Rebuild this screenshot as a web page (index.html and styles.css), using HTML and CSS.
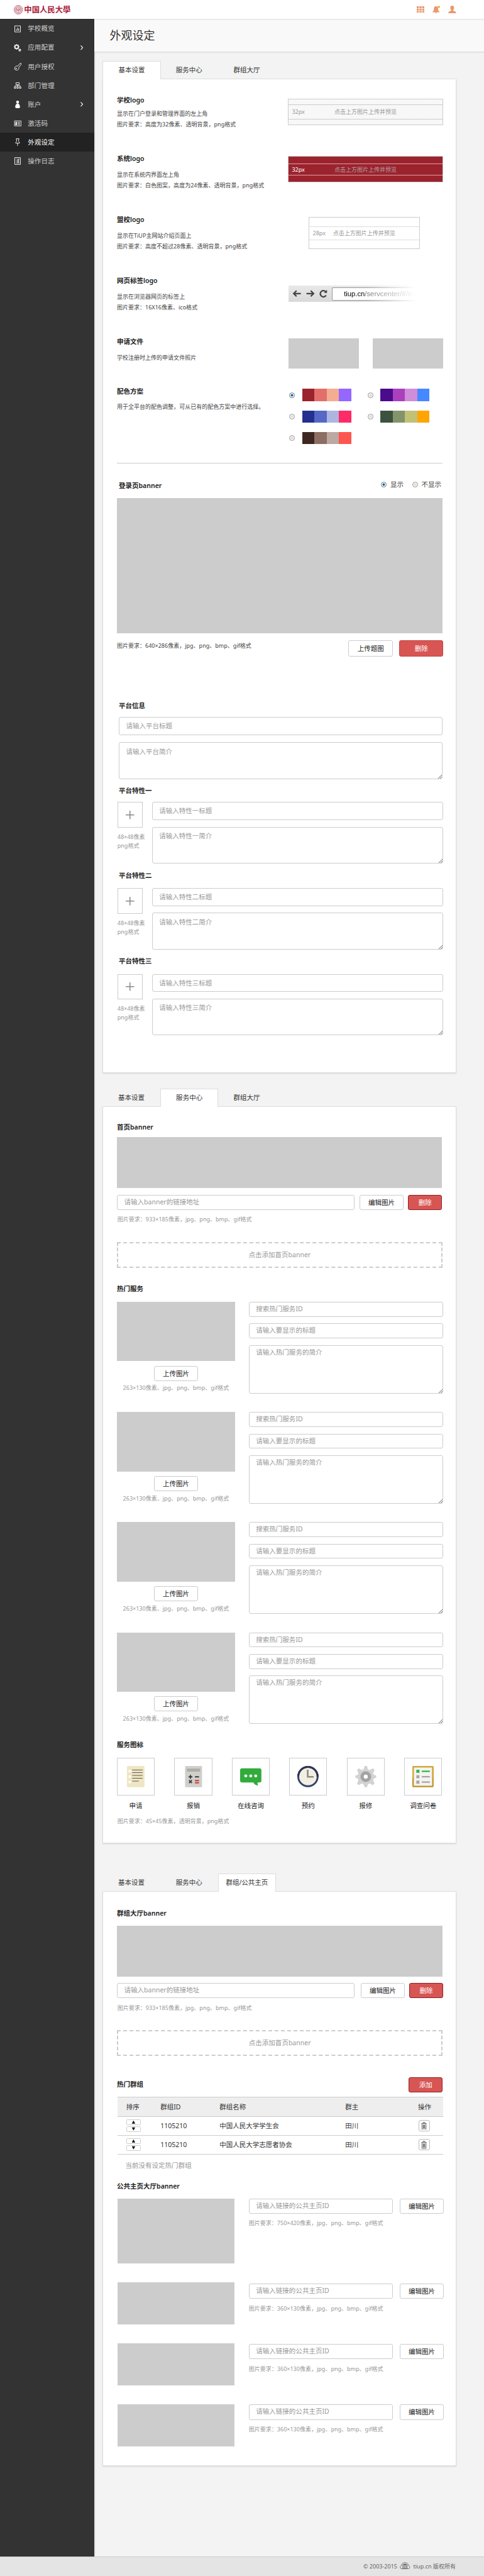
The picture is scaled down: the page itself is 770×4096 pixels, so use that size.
FILE: index.html
```html
<!DOCTYPE html>
<html lang="zh-CN">
<head>
<meta charset="utf-8">
<title>外观设定</title>
<link rel="stylesheet" href="styles.css">
</head>
<body>
<div class="page">
  <header class="topbar">
    <div class="brand">
      <svg width="19" height="20" viewBox="0 0 19 20" fill="none" stroke="#b0475a"><ellipse cx="9.5" cy="10" rx="8.8" ry="9.3" fill="#ecd0d5"/><ellipse cx="9.5" cy="10" rx="5.6" ry="6" fill="#fff"/><path d="M6.5 6.5v6M9.5 5.5v9M12.5 6.5v6M6.500 9l3 3 3-3" stroke-width="1.2"/></svg>
      <span class="brand-name">中国人民大學</span>
    </div>
    <div class="tools">
      <svg width="16" height="14" viewBox="0 0 16 14" fill="#e9986f"><path d="M0 0h4.500v4H0zM5.800 0h4.500v4H5.800zM11.500 0H16v4h-4.500zM0 5h4.500v4H0zM5.800 5h4.500v4H5.800zM11.500 5H16v4h-4.500zM0 10h4.500v4H0zM5.800 10h4.500v4H5.800zM11.500 10H16v4h-4.500z"/></svg>
      <svg width="16" height="17" viewBox="0 0 16 17" fill="#e9986f"><path d="M7.500 1c3.500.5 4.500 3 4.500 6 0 3 1 4.500 3 6v1H0v-1c2-1.500 3-3 3-6 0-3 1-5.500 4.500-6zM5.500 14.500h4c0 2.500-4 2.500-4 0z"/><circle cx="13.500" cy="2.500" r="2.300" fill="#f5a300"/></svg>
      <svg width="17" height="16" viewBox="0 0 17 16" fill="#e9986f"><path d="M8.500 0c3 0 4 2 4 4.500 0 2-.9 3.700-2 4.800v1.500c3 .8 6 1.700 6.500 5.200H0c.5-3.500 3.500-4.400 6.500-5.200V9.300c-1.100-1.100-2-2.800-2-4.800C4.500 2 5.500 0 8.500 0z"/></svg>
    </div>
  </header>
  <div class="frame">
    <nav class="side">
      <a class="item"><svg class="ico" viewBox="0 0 16 16"><path d="M2 1.500h12v13H2zM5.500 12V8.500M8 12V5M10.500 12V7" /></svg>学校概览</a>
      <a class="item"><svg class="ico" viewBox="0 0 16 16"><circle cx="6" cy="6" r="3.600" stroke-width="2.400"/><path d="M6 0v2M6 10v2M0 6h2M10 6h2M1.800 1.800l1.400 1.400M8.800 8.800l1.400 1.400M10.200 1.800L8.800 3.200M3.200 8.800l-1.400 1.400" stroke-width="1.800"/><circle cx="12.600" cy="12.800" r="1.700" stroke-width="2"/></svg>应用配置<svg class="chev" viewBox="0 0 8 10"><path d="M2 .5L6 5 2 9.500"/></svg></a>
      <a class="item"><svg class="ico" viewBox="0 0 16 16"><path d="M8.500 6.500L13.300.8h1.900v3L10.400 9.500c.8 2-.1 5-3.200 6-3 .6-6-1.300-5.600-4.500.5-3 4-5.300 6.900-4.500z"/><circle cx="5" cy="11.800" r="1"/></svg>用户授权</a>
      <a class="item"><svg class="ico" viewBox="0 0 16 16"><path d="M4.500 2h7v4h-7zM8 6v3M2.500 11V8.500h11V11M8 8.500V11M1 11h3v3H1zM6.500 11h3v3h-3zM12 11h3v3h-3z"/></svg>部门管理</a>
      <a class="item"><svg class="ico solid" viewBox="0 0 16 16"><circle cx="8" cy="3" r="3"/><path d="M8 5.800c3 1 5 4 5 7.200 0 2-1 3-2.500 3h-5C4 16 3 15 3 13c0-3.200 2-6.200 5-7.200z"/></svg>账户<svg class="chev" viewBox="0 0 8 10"><path d="M2 .5L6 5 2 9.500"/></svg></a>
      <a class="item"><svg class="ico" viewBox="0 0 16 16"><path d="M1.500 3h14v10.500h-14zM8.500 6h4.500M8.500 8.300h4.500M8.500 10.600h4.500"/><path d="M4 5.500h2.300v2H4zM3.600 8.800h3V11h-3z" fill="#fff"/></svg>激活码</a>
      <a class="item on"><svg class="ico" viewBox="0 0 16 16"><path d="M4.500.8h7M5.500.8L6 6.500c-1.600 1-2.200 2-2.200 3.500h8.400c0-1.500-.6-2.500-2.200-3.500l.5-5.700M8 10v6"/></svg>外观设定</a>
      <a class="item"><svg class="ico" viewBox="0 0 16 16"><path d="M2 .8h12v14.400H2zM5 4h1M7.500 4H12M5 8h6M5 12h7M7.500 6h4M7.500 10h4"/></svg>操作日志</a>
    </nav>
    <main class="main">
      <h1 class="title">外观设定</h1>

      <div class="tabs first"><a class="tab on">基本设置</a><a class="tab">服务中心</a><a class="tab">群组大厅</a></div>
      <section class="panel basic">
        <div class="row r1">
          <div><h2>学校logo</h2><p>显示在门户登录和管理界面的左上角<br>图片要求：高度为32像素、透明背景，png格式</p></div>
          <div class="drop hatch"><div class="band"><span>32px</span><b>点击上方图片上传并预览</b></div></div>
        </div>
        <div class="row r2">
          <div><h2>系统logo</h2><p>显示在系统内界面左上角<br>图片要求：白色图案，高度为24像素、透明背景，png格式</p></div>
          <div class="drop red"><div class="band"><span>32px</span><b>点击上方图片上传并预览</b></div></div>
        </div>
        <div class="row r3">
          <div><h2>盟校logo</h2><p>显示在TiUP主网站介绍页面上<br>图片要求：高度不超过28像素、透明背景，png格式</p></div>
          <div class="drop small"><div class="band"><span>28px</span><b>点击上方图片上传并预览</b></div></div>
        </div>
        <div class="row r4">
          <div><h2>网页标签logo</h2><p>显示在浏览器网页的标签上<br>图片要求：16X16像素、ico格式</p></div>
          <div class="browser">
            <svg width="84" height="34" viewBox="0 0 84 34" fill="none" stroke="#444" stroke-width="3"><path d="M26 17H12M17 11l-6 6 6 6M38 17h14M47 11l6 6-6 6"/><path d="M79.500 20.500a6.500 6.500 0 1 1-1-7.500"/><path d="M81.500 9v6.500H75z" fill="#444" stroke="none"/></svg>
            <div class="url"><i>tiup.cn</i>/servcenter/#/in</div>
          </div>
        </div>
        <div class="row r5">
          <div><h2>申请文件</h2><p>学校注册时上传的申请文件照片</p></div>
          <div class="files"><div class="gray"></div><div class="gray"></div></div>
        </div>
        <div class="row r6">
          <div><h2>配色方案</h2><p>用于全平台的配色调整，可从已有的配色方案中进行选择。</p></div>
          <div class="schemes">
            <div class="scheme"><i class="radio checked"></i><div class="sw s1"><i></i><i></i><i></i><i></i></div></div>
            <div class="scheme"><i class="radio"></i><div class="sw s2"><i></i><i></i><i></i><i></i></div></div>
            <div class="scheme"><i class="radio"></i><div class="sw s3"><i></i><i></i><i></i><i></i></div></div>
            <div class="scheme"><i class="radio"></i><div class="sw s4"><i></i><i></i><i></i><i></i></div></div>
            <div class="scheme"><i class="radio"></i><div class="sw s5"><i></i><i></i><i></i><i></i></div></div>
          </div>
        </div>
        <div class="rule"></div>
        <div class="login-head"><h2>登录页banner</h2><div class="choices"><i class="radio checked"></i><span>显示</span><i class="radio second"></i><span>不显示</span></div></div>
        <div class="gray login-img"></div>
        <div class="login-foot"><p>图片要求：640×286像素，jpg、png、bmp、gif格式</p><a class="btn up">上传题图</a><a class="btn danger flat">删除</a></div>
        <h2 class="inset info">平台信息</h2>
        <div class="field tall wide">请输入平台标题</div>
        <div class="field area wide mt15">请输入平台简介</div>
        <h2 class="inset feat-title">平台特性一</h2>
        <div class="feature"><div><div class="plus"></div><p class="muted">48×48像素<br>png格式</p></div><div><div class="field tall">请输入特性一标题</div><div class="field area">请输入特性一简介</div></div></div>
        <h2 class="inset feat-title next">平台特性二</h2>
        <div class="feature"><div><div class="plus"></div><p class="muted">48×48像素<br>png格式</p></div><div><div class="field tall">请输入特性二标题</div><div class="field area">请输入特性二简介</div></div></div>
        <h2 class="inset feat-title next">平台特性三</h2>
        <div class="feature"><div><div class="plus"></div><p class="muted">48×48像素<br>png格式</p></div><div><div class="field tall">请输入特性三标题</div><div class="field area">请输入特性三简介</div></div></div>
      </section>

      <div class="tabs second"><a class="tab">基本设置</a><a class="tab on">服务中心</a><a class="tab">群组大厅</a></div>
      <section class="panel service">
        <h2>首页banner</h2>
        <div class="gray banner"></div>
        <div class="link-row"><div class="field">请输入banner的链接地址</div><a class="btn">编辑图片</a><a class="btn danger">删除</a></div>
        <p class="muted note">图片要求：933×185像素，jpg、png、bmp、gif格式</p>
        <div class="adder">点击添加首页banner</div>
        <h2 class="hot">热门服务</h2>
        <div class="services">
          <div class="svc"><div class="svc-l"><div class="gray"></div><a class="btn">上传图片</a><p class="muted">263×130像素、jpg、png、bmp、gif格式</p></div><div class="svc-r"><div class="field">搜索热门服务ID</div><div class="field">请输入要显示的标题</div><div class="field area">请输入热门服务的简介</div></div></div>
          <div class="svc"><div class="svc-l"><div class="gray"></div><a class="btn">上传图片</a><p class="muted">263×130像素、jpg、png、bmp、gif格式</p></div><div class="svc-r"><div class="field">搜索热门服务ID</div><div class="field">请输入要显示的标题</div><div class="field area">请输入热门服务的简介</div></div></div>
          <div class="svc"><div class="svc-l"><div class="gray"></div><a class="btn">上传图片</a><p class="muted">263×130像素、jpg、png、bmp、gif格式</p></div><div class="svc-r"><div class="field">搜索热门服务ID</div><div class="field">请输入要显示的标题</div><div class="field area">请输入热门服务的简介</div></div></div>
          <div class="svc"><div class="svc-l"><div class="gray"></div><a class="btn">上传图片</a><p class="muted">263×130像素、jpg、png、bmp、gif格式</p></div><div class="svc-r"><div class="field">搜索热门服务ID</div><div class="field">请输入要显示的标题</div><div class="field area">请输入热门服务的简介</div></div></div>
        </div>
        <h2 class="icons-title">服务图标</h2>
        <div class="tiles">
          <div class="tile"><div class="pic"><svg viewBox="0 0 45 45"><rect x="4" width="37" height="45" rx="2" fill="#eee6c4"/><g fill="#fff"><circle cx="10" cy="11" r="2.800"/><circle cx="10" cy="22.500" r="2.800"/><circle cx="10" cy="34" r="2.800"/></g><path d="M15 8.500h22M15 14h22M15 20h22M15 26h22M15 32h14" stroke="#5d5648" stroke-width="1.300"/></svg></div>申请</div>
          <div class="tile"><div class="pic"><svg viewBox="0 0 45 45"><rect x="4.500" width="36" height="45" rx="2" fill="#d0cfca"/><path d="M8.500 5.500h28V12h-28z" fill="#aeada6"/><path d="M12 23h8M16 19v8M25.500 23h8.500M13 30l6 6M19 30l-6 6" stroke="#333d44" stroke-width="2.500"/><path d="M25.500 31h8.500M25.500 35.500h8.500" stroke="#c53b30" stroke-width="2.500"/></svg></div>报销</div>
          <div class="tile"><div class="pic"><svg viewBox="0 0 45 45"><path d="M4 5h37q4 0 4 4v22q0 4-4 4h-4q-1 4 1.500 6.500Q31 41 28 35H4q-4 0-4-4V9q0-4 4-4z" fill="#31ab3b"/><g fill="#fff"><circle cx="12" cy="21" r="3.200"/><circle cx="22.500" cy="21" r="3.200"/><circle cx="33" cy="21" r="3.200"/></g></svg></div>在线咨询</div>
          <div class="tile"><div class="pic"><svg viewBox="0 0 45 45"><circle cx="22.500" cy="22.500" r="20.500" fill="#f2eee2" stroke="#36446b" stroke-width="4"/><path d="M2 22.500a20.500 20.500 0 0 1 41 0" fill="none" stroke="#2c3552" stroke-width="4"/><path d="M22 8v15h12.500" fill="none" stroke="#8c8b88" stroke-width="3.500"/></svg></div>预约</div>
          <div class="tile"><div class="pic"><svg viewBox="0 0 45 45"><path d="M20 0h5l2 7 4 1.800L37.500 5l3.700 3.600L38 15l1.500 4 5 1v5l-5 1.500-1.500 4 3.200 6.500-3.700 3.500L31 37l-4 1.800L25 45h-5l-2-6.200L14 37l-6.500 3.500L3.800 37 7 30.500 5.500 26.500.5 25v-5l5-1L7 15 3.800 8.600 7.500 5 14 8.800 18 7z" fill="#d2d2d2"/><circle cx="22.500" cy="22.500" r="7.800" fill="#fff" stroke="#a3a3a3" stroke-width="7"/></svg></div>报修</div>
          <div class="tile"><div class="pic"><svg viewBox="0 0 45 45"><rect x="1.500" y="1.500" width="42" height="42" rx="2" fill="#f3f3f3" stroke="#c2901e" stroke-width="3"/><path d="M1.500 26V3q0-1.500 1.500-1.500h39q1.500 0 1.500 1.500v23" fill="none" stroke="#d5a83f" stroke-width="3"/><path d="M8.500 8H15v6.500H8.500z" fill="#31b73a"/><path d="M20 11.300h17" stroke="#31b73a" stroke-width="3"/><path d="M8.500 19.500H15V26H8.500zM8.500 31H15v6.500H8.500z" fill="#aaa2a5"/><path d="M20 22.700h17M20 34.200h17" stroke="#aaa2a5" stroke-width="3"/></svg></div>调查问卷</div>
        </div>
        <p class="muted tiles-note">图片要求：45×45像素，透明背景，png格式</p>
      </section>

      <div class="tabs third"><a class="tab">基本设置</a><a class="tab">服务中心</a><a class="tab on">群组/公共主页</a></div>
      <section class="panel group">
        <h2>群组大厅banner</h2>
        <div class="gray banner"></div>
        <div class="link-row"><div class="field">请输入banner的链接地址</div><a class="btn">编辑图片</a><a class="btn danger">删除</a></div>
        <p class="muted note">图片要求：933×185像素，jpg、png、bmp、gif格式</p>
        <div class="adder">点击添加首页banner</div>
        <div class="hot-head"><h2>热门群组</h2><a class="btn danger">添加</a></div>
        <div class="table">
          <div class="tr th"><span>排序</span><span>群组ID</span><span>群组名称</span><span>群主</span><span>操作</span></div>
          <div class="tr"><span class="sort"><i>▲</i><i>▼</i></span><span>1105210</span><span>中国人民大学学生会</span><span>田川</span><span class="bin"><svg viewBox="0 0 12 18"><path d="M.5 3.500h11M4 3V1h4v2M1.500 4v13h9V4M4.200 6v9M6 6v9M7.800 6v9"/></svg></span></div>
          <div class="tr"><span class="sort"><i>▲</i><i>▼</i></span><span>1105210</span><span>中国人民大学志愿者协会</span><span>田川</span><span class="bin"><svg viewBox="0 0 12 18"><path d="M.5 3.500h11M4 3V1h4v2M1.500 4v13h9V4M4.200 6v9M6 6v9M7.800 6v9"/></svg></span></div>
        </div>
        <p class="empty">当前没有设定热门群组</p>
        <h2 class="pub-title">公共主页大厅banner</h2>
        <div class="pub big"><div class="gray"></div><div class="pub-r"><div class="pub-f"><div class="field">请输入链接的公共主页ID</div><a class="btn">编辑图片</a></div><p class="muted">图片要求：750×420像素，jpg、png、bmp、gif格式</p></div></div>
        <div class="pub two"><div class="gray"></div><div class="pub-r"><div class="pub-f"><div class="field">请输入链接的公共主页ID</div><a class="btn">编辑图片</a></div><p class="muted">图片要求：360×130像素，jpg、png、bmp、gif格式</p></div></div>
        <div class="pub three"><div class="gray"></div><div class="pub-r"><div class="pub-f"><div class="field">请输入链接的公共主页ID</div><a class="btn">编辑图片</a></div><p class="muted">图片要求：360×130像素，jpg、png、bmp、gif格式</p></div></div>
        <div class="pub"><div class="gray"></div><div class="pub-r"><div class="pub-f"><div class="field">请输入链接的公共主页ID</div><a class="btn">编辑图片</a></div><p class="muted">图片要求：360×130像素，jpg、png、bmp、gif格式</p></div></div>
      </section>
    </main>
  </div>
  <footer class="foot"><span>© 2003-2015</span><svg width="22" height="15" viewBox="0 0 22 15"><path d="M5 14H4c-4 0-4-6-.5-7C4 3 7 1 11 1s7 2 7.500 6c3.500 1 3.500 7-.5 7h-1" fill="none" stroke="#666" stroke-width="1.200"/><path d="M5 6l6-3 6 3v1H5zM6 8h2v4H6zM10 8h2v4h-2zM14 8h2v4h-2zM5 12.500h12V14.500H5z" fill="#666"/></svg><span>tiup.cn 版权所有</span></footer>
</div>
</body>
</html>
```

FILE: styles.css
```css
* { box-sizing: border-box; }
html { overflow: hidden; background: #e4e4e4; }
body { margin: 0; width: 770px; overflow: hidden; }
h1, h2, p { margin: 0; font-weight: normal; }
i, b { font-style: normal; font-weight: normal; }
svg { display: block; }

.page {
  zoom: .752;
  width: 1024px;
  height: 5447px;
  display: flex;
  flex-direction: column;
  background: #f3f3f3;
  color: #333;
  font: 14px/20px "Noto Sans", "Noto Sans CJK SC", sans-serif;
  white-space: nowrap;
}

/* top bar */
.topbar {
  height: 40px;
  flex: none;
  display: flex;
  justify-content: space-between;
  align-items: center;
  padding: 0 59px 0 29px;
  background: #fff;
  box-shadow: 0 1px 3px rgba(0, 0, 0, .2);
  position: relative;
  z-index: 2;
}
.brand { display: flex; align-items: center; gap: 3px; }
.brand-name { color: #a8203a; font-family: "Noto Sans CJK SC", sans-serif; font-size: 16.400px; font-weight: bold; }
.tools { display: flex; align-items: center; gap: 17px; }

/* sidebar */
.frame { display: flex; height: 5365px; flex: none; }
.side { width: 200px; flex: none; padding-top: 1px; background: #333; box-shadow: 1px 0 3px rgba(0, 0, 0, .25); }
.item { display: flex; align-items: center; height: 40px; padding: 0 23px 0 29px; color: #ccc; }
.item.on { background: #222; color: #fff; }
.ico { width: 16px; height: 16px; margin-right: 14px; fill: none; stroke: #eee; stroke-width: 1.300; }
.ico.solid { fill: #fff; stroke: none; }
.chev { width: 8px; height: 10px; margin-left: auto; fill: none; stroke: #fff; stroke-width: 1.500; }

/* main column */
.main { flex: 1; }
.title { height: 71px; padding: 0 32px; background: #f9f9f9; border-bottom: 1px solid #ddd; box-shadow: 0 1px 3px rgba(0, 0, 0, .1); font-size: 24px; line-height: 70px; }
.tabs { display: flex; height: 37px; margin-left: 17px; }
.tabs.first { margin-top: 18px; }
.tabs.second { margin-top: 33px; }
.tabs.third { margin-top: 64px; }
.tab { width: 122px; text-align: center; line-height: 38px; }
.tab.on { position: relative; height: 38px; background: #fff; border: 1px solid #ddd; border-bottom: 0; line-height: 36px; margin-right: -1px; width: 123px; }
.panel { width: 749px; margin-left: 17px; padding-left: 29px; padding-right: 28px; background: #fff; border: 1px solid #ddd; box-shadow: 0 2px 3px rgba(0, 0, 0, .1); }
.panel h2 { font-size: 14px; line-height: 20px; font-weight: 600; color: #222; }
.basic { height: 2103px; padding-top: 35px; }
.service { height: 1559px; padding-top: 34px; }
.group { height: 1215px; padding-top: 35px; }
.gray { background: #ccc; }
.muted { color: #999; font-size: 12px; line-height: 22px; }

/* form parts */
.field { position: relative; height: 32px; padding: 0 14px; border: 1px solid #ccc; border-radius: 4px; background: #fff; color: #999; line-height: 29px; }
.field.tall { height: 38px; line-height: 35px; }
.field.area { height: 78px; padding-top: 9px; line-height: 20px; }
.field.area::after { content: ""; position: absolute; right: 0; bottom: 0; width: 8px; height: 8px; background: linear-gradient(135deg, transparent 48%, #666 48% 56%, transparent 56% 72%, #666 72% 80%, transparent 80%); }
.btn { width: 92px; height: 32px; border: 1px solid #ccc; border-radius: 4px; background: #fff; color: #222; line-height: 31px; text-align: center; }
.btn.danger { width: 72px; background: #d75553; border-color: #8f1f28; color: #fff; }
.radio { width: 12px; height: 12px; border: 1px solid #999; border-radius: 50%; background: #ddd; box-shadow: inset 0 0 0 1.500px #fff; }
.radio.checked { background: #17629a; box-shadow: inset 0 0 0 2px #fff; }

/* basic settings */
.row { display: grid; grid-template-columns: 362px 328px; align-items: start; height: 129px; }
.row p { margin-top: 14px; font-size: 12px; line-height: 22px; color: #444; }
.r1 { height: 123px; }
.row.r1 p { margin-top: 8px; }
.r5 { height: 105px; }
.r6 { height: 162px; }
.row.r6 p { margin-top: 13px; }
.drop { margin-top: 4px; height: 56px; padding-top: 15px; border: 1px solid #ccc; font-size: 12px; color: #999; }
.band { display: grid; grid-template-columns: 1fr auto 1fr; align-items: center; height: 26px; border: solid #ccc; border-width: 1px 0; padding: 0 7px; }
.hatch { margin-top: 6px; padding-top: 11px; background: repeating-linear-gradient(135deg, #f5f5f5 0 2px, #fafafa 2px 4px); }
.hatch .band { height: 32px; }
.red { background: #9b232e; }
.red .band { border-color: #e5a0a6; color: #b3a0a0; }
.red span { color: #fff; }
.small { width: 236px; height: 68px; margin-left: 43px; padding-top: 19px; }
.small .band { height: 29px; border-color: #ddd; padding: 0 8px; }
.browser { display: flex; width: 277px; height: 34px; margin: 21px 0 0 1px; overflow: hidden; background: linear-gradient(#e8e8e8, #d9d9d9); -webkit-mask-image: linear-gradient(90deg, #000 60%, transparent 97%); mask-image: linear-gradient(90deg, #000 60%, transparent 97%); }
.url { flex: 1; height: 27px; margin: 4px 0 0 8px; padding-left: 24px; border: 1px solid #999; border-right: 0; border-radius: 3px 0 0 3px; background: #fff; font: 15px/26px "Liberation Sans", sans-serif; color: #777; }
.url i { color: #000; }
.files { display: flex; justify-content: space-between; margin: 3px 0 0 1px; }
.files .gray { width: 149px; height: 64px; }
.schemes { display: grid; grid-template-columns: 165.500px auto; grid-auto-rows: 26px; row-gap: 19.500px; margin: 5px 0 0 3px; }
.scheme { display: flex; align-items: center; gap: 15px; }
.sw { display: flex; width: 104px; height: 26px; }
.sw i { flex: 1; }
.s1 i:nth-child(1) { background: #9b232e; } .s1 i:nth-child(2) { background: #e36f6b; } .s1 i:nth-child(3) { background: #f4ad92; } .s1 i:nth-child(4) { background: #9467ff; }
.s2 i:nth-child(1) { background: #4a0b8c; } .s2 i:nth-child(2) { background: #ab3fbd; } .s2 i:nth-child(3) { background: #cf8dda; } .s2 i:nth-child(4) { background: #4588ff; }
.s3 i:nth-child(1) { background: #24308f; } .s3 i:nth-child(2) { background: #5668c5; } .s3 i:nth-child(3) { background: #aeb5e1; } .s3 i:nth-child(4) { background: #ff2a68; }
.s4 i:nth-child(1) { background: #3c5240; } .s4 i:nth-child(2) { background: #84946a; } .s4 i:nth-child(3) { background: #c3c078; } .s4 i:nth-child(4) { background: #ffa500; }
.s5 i:nth-child(1) { background: #3e2721; } .s5 i:nth-child(2) { background: #8c6e63; } .s5 i:nth-child(3) { background: #bba9a2; } .s5 i:nth-child(4) { background: #ff5550; }
.rule { height: 1.400px; background: #ccc; margin-bottom: -.4px; }
.login-head { display: flex; justify-content: space-between; height: 73px; padding: 37px 3px 0 4px; }
.choices { display: flex; align-items: center; height: 20px; margin-top: -2px; color: #444; }
.choices span { margin-left: 8px; }
.choices .second { margin-left: 18px; }
.login-img { height: 286px; }
.login-foot { display: flex; height: 49px; padding-top: 15px; }
.login-foot p { flex: 1; font-size: 12px; line-height: 24px; color: #444; }
.login-foot .btn { width: 95px; height: 34px; line-height: 32px; margin-right: 13px; }
.login-foot .danger { width: 93px; margin-right: -1px; border-color: #c74643; }
.panel .inset { padding-left: 4px; }
.info { margin: 95px 0 13px; }
.wide { margin-left: 4px; }
.mt15 { margin-top: 15px; }
.feat-title { margin: 15px 0 14px; }
.feat-title.next { margin: 12.500px 0 16.500px; }
.feature { display: grid; grid-template-columns: 74px 616px; height: 132.600px; }
.feature .area { margin-top: 14px; }
.feature .muted { margin-left: 1px; margin-top: 11px; line-height: 18.500px; }
.plus { width: 54px; height: 54px; margin-left: 1px; border: 1px solid #ccc; background: linear-gradient(#888, #888) center / 18px 2px no-repeat, linear-gradient(#888, #888) center / 2px 18px no-repeat; }

/* shared banner editor */
.banner { height: 108px; margin-top: 10px; }
.service .banner { width: 688px; }
.group .banner { margin-top: 16px; }
.link-row { display: flex; margin-top: 14px; }
.link-row .field { width: 503px; margin-right: 11px; }
.link-row .btn { margin-right: 10px; }
.group .link-row .field { margin-right: 14px; }
.link-row .danger { margin-right: -1px; }
.note { margin: 10px 0 0 1px; }
.adder { display: grid; place-items: center; height: 54px; margin-top: 36.500px; border: 2.700px dashed #ccc; color: #999; }
.service .adder { width: 688.500px; }
.group .adder { margin-top: 36px; }

/* hot services */
.hot { margin: 34.500px 0 17.500px; }
.services { display: grid; gap: 39px; }
.svc { display: grid; grid-template-columns: 250px 411px; column-gap: 29px; height: 194px; }
.svc-l { display: flex; flex-direction: column; align-items: center; }
.svc-l .gray { width: 250px; height: 125.500px; margin-bottom: 9.500px; }
.svc-l .muted { margin-top: 5px; }
.svc-r { display: grid; grid-template-rows: 31.500px 31.500px 102px; row-gap: 14.250px; }
.svc-r .field { height: auto; }
.svc-r .area { padding-top: 4px; }
.icons-title { margin: 34.500px 0 17px; }
.tiles { display: flex; justify-content: space-between; width: 688px; }
.tile { width: 80px; text-align: center; color: #222; }
.pic { display: grid; place-items: center; height: 80px; margin-bottom: 11px; border: 1px solid #ccc; }
.pic svg { width: 45px; height: 45px; }
.tiles-note { margin: 12px 0 0 1px; }

/* hot groups */
.hot-head { display: flex; justify-content: space-between; align-items: center; margin-top: 44px; height: 33px; }
.table { margin: 10px -1px 0 2px; border-top: 1px solid #ccc; }
.tr { display: grid; grid-template-columns: 72.500px 125px 266px 154px auto; align-items: center; height: 40px; padding-left: 17.500px; border-bottom: 1px solid #ccc; }
.th { background: #eee; }
.sort { display: grid; gap: 3px; }
.sort i { width: 31px; height: 12px; border: 1px solid #ccc; border-radius: 2px; color: #000; font: 9px/10px "DejaVu Sans", sans-serif; text-align: center; }
.bin { display: grid; place-items: center; width: 24px; height: 24px; margin-left: 1px; border: 1px solid #bbb; border-radius: 4px; }
.bin svg { width: 12px; height: 17px; fill: none; stroke: #222; stroke-width: 1; }
.empty { margin: 14px 0 24px 18px; color: #999; }
.pub-title { margin-bottom: 15px; }
.pub { display: grid; grid-template-columns: 249px 412px; column-gap: 30px; height: 89px; margin-bottom: 40px; margin-right: -1px; }
.pub .gray { margin-left: 1px; }
.pub.big { height: 138px; }
.pub.big .gray { margin-left: 2px; }
.pub-f { display: flex; justify-content: space-between; }
.pub-f .field { width: 305px; }
.pub .muted { margin-top: 10px; }
.two .pub-r { padding-top: 2px; }
.three .pub-r { padding-top: 1px; }

.foot { display: flex; justify-content: flex-end; align-items: center; gap: 6px; flex: 1; padding: 0 60px 2px 0; border-top: 1px solid #ccc; background: #e4e4e4; color: #666; font-size: 12px; }
```
